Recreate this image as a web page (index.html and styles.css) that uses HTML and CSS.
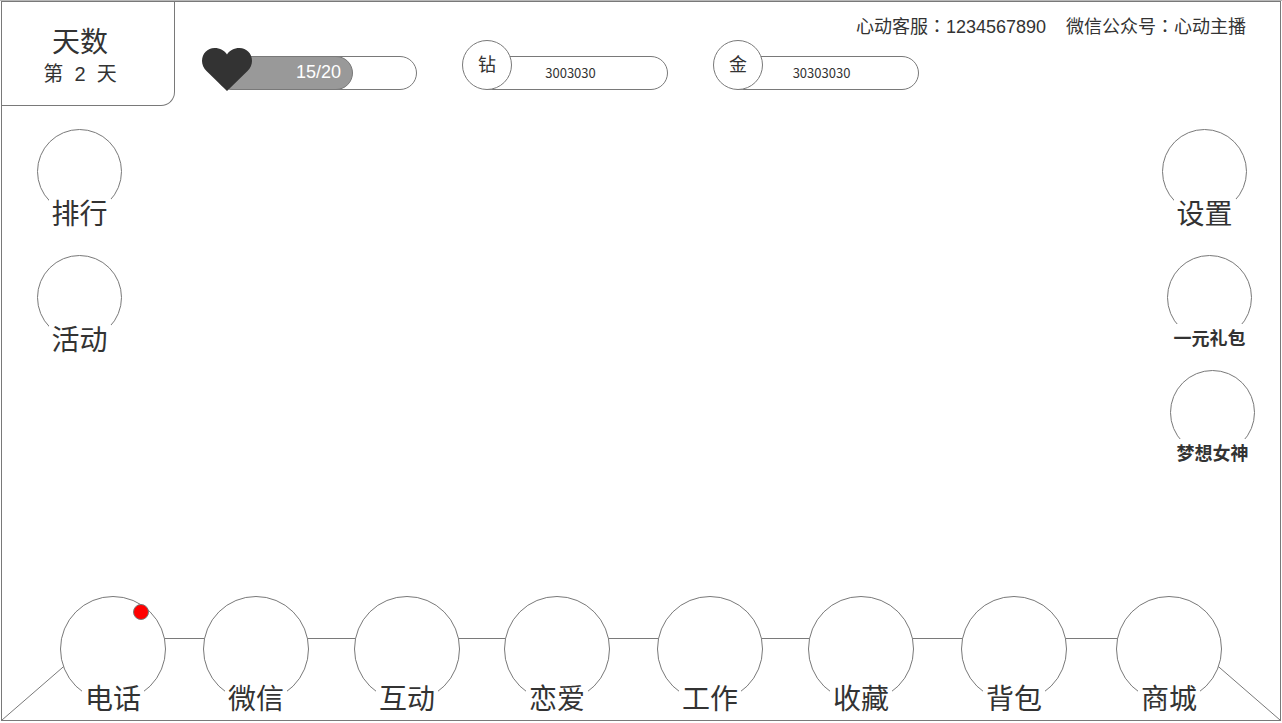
FILE: index.html
```html
<!DOCTYPE html>
<html lang="zh-CN">
<head>
<meta charset="utf-8">
<meta name="viewport" content="width=device-width, initial-scale=1">
<title>心动主播</title>
<link rel="stylesheet" href="styles.css">
</head>
<body>
<div class="frame">
  <header class="topbar">
    <section class="days">
      <h1 class="days-title">天数</h1>
      <p class="days-value">第&nbsp; 2&nbsp; 天</p>
    </section>
    <div class="topbar-main">
      <div class="contact">
        <span>心动客服<span class="colon" lang="zh-Hant">：</span>1234567890</span>
        <span>微信公众号<span class="colon" lang="zh-Hant">：</span>心动主播</span>
      </div>
      <div class="stats">
        <div class="stat">
          <svg class="heart" viewBox="0 0 50 50" aria-hidden="true"><path d="M25 51 L4.5 31 C1.500 28 0 24.500 0 21 C0 13.500 5.500 8 12.500 8 C18 8 22.500 10.500 25 14.500 C27.500 10.500 32 8 37.500 8 C44.500 8 50 13.500 50 21 C50 24.500 48.500 28 45.500 31 Z"/></svg>
          <div class="pill pill-meter"><div class="meter-fill">15/20</div></div>
        </div>
        <div class="stat">
          <span class="badge">钻</span>
          <div class="pill pill-count">3003030</div>
        </div>
        <div class="stat">
          <span class="badge">金</span>
          <div class="pill pill-count">30303030</div>
        </div>
      </div>
    </div>
  </header>

  <main class="scene">
    <div class="side side-left">
      <button class="item" type="button"><span class="ring"></span><span class="label">排行</span></button>
      <button class="item" type="button"><span class="ring"></span><span class="label">活动</span></button>
    </div>
    <div class="side side-right">
      <button class="item item-settings" type="button"><span class="ring"></span><span class="label">设置</span></button>
      <div class="offers">
        <button class="item item-gift" type="button"><span class="ring"></span><span class="label label-offer">一元礼包</span></button>
        <button class="item" type="button"><span class="ring"></span><span class="label label-offer">梦想女神</span></button>
      </div>
    </div>
  </main>

  <nav class="dock">
    <svg class="floor" viewBox="0 0 1278 83" preserveAspectRatio="none" aria-hidden="true"><polyline points="0,83 94,0.5 1184,0.5 1278,83"/></svg>
    <div class="dock-items">
      <button class="item" type="button"><span class="ring ring-large"><i class="dot"></i></span><span class="label label-dock">电话</span></button>
      <button class="item" type="button"><span class="ring ring-large"></span><span class="label label-dock">微信</span></button>
      <button class="item" type="button"><span class="ring ring-large"></span><span class="label label-dock">互动</span></button>
      <button class="item" type="button"><span class="ring ring-large"></span><span class="label label-dock">恋爱</span></button>
      <button class="item" type="button"><span class="ring ring-large"></span><span class="label label-dock">工作</span></button>
      <button class="item" type="button"><span class="ring ring-large"></span><span class="label label-dock">收藏</span></button>
      <button class="item" type="button"><span class="ring ring-large"></span><span class="label label-dock">背包</span></button>
      <button class="item" type="button"><span class="ring ring-large"></span><span class="label label-dock">商城</span></button>
    </div>
  </nav>
</div>
</body>
</html>
```
FILE: styles.css
```css
* { box-sizing: border-box; }

body {
  margin: 0;
  min-height: 100vh;
  display: flex;
  flex-direction: column;
  padding: 0 1px 2px;
  border-top: 1px solid #b8b8b8;
  background: #fff;
  color: #333;
  font-family: "Liberation Sans", "Noto Sans CJK SC", sans-serif;
}

.frame {
  flex: 1;
  display: flex;
  flex-direction: column;
  border: 1px solid #797979;
}

/* Top bar */
.topbar { display: flex; align-items: flex-start; }

.days {
  width: 173px;
  height: 104px;
  padding: 25px 16px 0 0;
  border: solid #797979;
  border-width: 0 1px 1px 0;
  border-bottom-right-radius: 14px;
  text-align: center;
}
.days-title { margin: 0; font-size: 28px; line-height: 32px; font-weight: 400; }
.days-value { margin: 0; font-size: 20px; line-height: 30px; }

.topbar-main { flex: 1; padding-top: 13px; }

.contact {
  display: flex;
  justify-content: flex-end;
  gap: 20px;
  height: 25px;
  padding-right: 34px;
  font-size: 18px;
  line-height: 24px;
}
.colon { font-family: "Noto Sans CJK TC", sans-serif; line-height: 1; }

.stats { display: flex; gap: 45px; padding-left: 27px; }
.stat { display: flex; align-items: flex-end; }

.heart {
  position: relative;
  z-index: 1;
  width: 50px;
  height: 50px;
  overflow: visible;
  fill: #333;
}
.badge {
  position: relative;
  z-index: 1;
  width: 50px;
  height: 50px;
  border: 1px solid #797979;
  border-radius: 50%;
  background: #fff;
  font-size: 18px;
  line-height: 48px;
  text-align: center;
}

.pill {
  height: 34px;
  border: 1px solid #797979;
  border-radius: 17px;
}
.pill-meter { width: 201px; margin-left: -36px; }
.meter-fill {
  width: 137px;
  height: 34px;
  margin: -1px;
  padding-right: 11px;
  border: 1px solid #797979;
  border-radius: 17px;
  background: #999;
  color: #fff;
  font-size: 18px;
  line-height: 30px;
  text-align: right;
}
.pill-count {
  width: 195px;
  margin-left: -39px;
  font-family: "Noto Sans CJK SC", sans-serif;
  font-size: 13px;
  line-height: 32px;
  text-align: center;
}

/* Round buttons */
.item {
  display: flex;
  flex-direction: column;
  align-items: center;
  padding: 0;
  border: 0;
  background: none;
  color: inherit;
  font: inherit;
  cursor: pointer;
}
.ring {
  position: relative;
  width: 85px;
  height: 85px;
  border: 1px solid #797979;
  border-radius: 50%;
  background: #fff;
}
.ring-large { width: 106px; height: 106px; }
.label {
  position: relative;
  min-width: 62px;
  margin-top: -15px;
  background: #fff;
  font-size: 28px;
  line-height: 32px;
  text-align: center;
}
.label-offer { margin-top: -16px; font-size: 18px; line-height: 30px; font-weight: 700; }
.label-dock { margin-top: -18px; }

.dot {
  position: absolute;
  top: 7px;
  right: 16px;
  width: 16px;
  height: 16px;
  border: 1px solid #797979;
  border-radius: 50%;
  background: #f00;
}

/* Side columns */
.scene {
  flex: 1;
  display: flex;
  justify-content: space-between;
  padding: 23px 25px 24px 35px;
}
.side { display: flex; flex-direction: column; gap: 24px; }
.side-right { align-items: flex-end; }
.offers { display: flex; flex-direction: column; align-items: flex-end; gap: 16px; }
.item-settings { margin-right: 8px; }
.item-gift { margin-right: 3px; }

/* Bottom dock */
.dock { position: relative; padding: 0 58px 4px; }
.floor {
  position: absolute;
  left: 0;
  bottom: 0;
  width: 100%;
  height: 82px;
  fill: none;
  stroke: #797979;
}
.floor polyline { vector-effect: non-scaling-stroke; }
.dock-items {
  position: relative;
  display: grid;
  grid-template-columns: 143fr 151fr 150fr 153fr 151fr 153fr 155fr 106px;
  justify-items: start;
}
```
